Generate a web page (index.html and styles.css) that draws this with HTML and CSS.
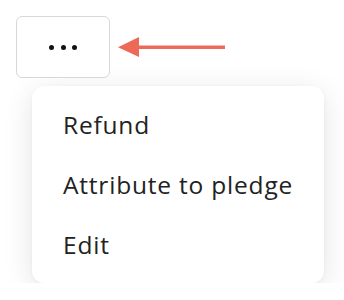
FILE: index.html
```html
<!DOCTYPE html>
<html>
<head>
<meta charset="utf-8">
<link rel="stylesheet" href="styles.css">
</head>
<body>
<div class="page">
  <div class="toolbar">
    <button class="more-btn" aria-label="More">
      <span class="dot"></span><span class="dot"></span><span class="dot"></span>
    </button>
    <svg class="arrow" width="110" height="24" viewBox="0 0 110 24">
      <rect x="18" y="10.5" width="89" height="3.5" fill="#ee6a58"/>
      <polygon points="0,12.2 21,2 21,22" fill="#ee6a58"/>
    </svg>
  </div>
  <ul class="menu">
    <li class="menu-item">Refund</li>
    <li class="menu-item">Attribute to pledge</li>
    <li class="menu-item">Edit</li>
  </ul>
</div>
</body>
</html>
```
FILE: styles.css
```css
html, body {
  margin: 0;
  padding: 0;
  background: #ffffff;
}
.page {
  padding: 16px 0 0 16px;
  font-family: "Open Sans", Inter, sans-serif;
}
.toolbar {
  display: flex;
  align-items: center;
  gap: 8px;
}
.more-btn {
  width: 94px;
  height: 62px;
  box-sizing: border-box;
  border: 1.5px solid #d8d8d8;
  border-radius: 6px;
  background: #ffffff;
  display: flex;
  align-items: center;
  justify-content: center;
  gap: 6.5px;
  padding: 0;
}
.dot {
  width: 5px;
  height: 5px;
  border-radius: 50%;
  background: #111;
}
.arrow {
  display: block;
}
.menu {
  list-style: none;
  margin: 8px 0 0 16px;
  width: 292px;
  height: 197px;
  box-sizing: border-box;
  padding: 8px 0 9px 31px;
  background: #fff;
  border-radius: 12px;
  box-shadow: 0 6px 30px rgba(0,0,0,0.11), 0 1px 4px rgba(0,0,0,0.04);
}
.menu-item {
  height: 60px;
  display: flex;
  align-items: center;
  font-size: 24.5px;
  color: #222;
  letter-spacing: 0.8px;
}
```
